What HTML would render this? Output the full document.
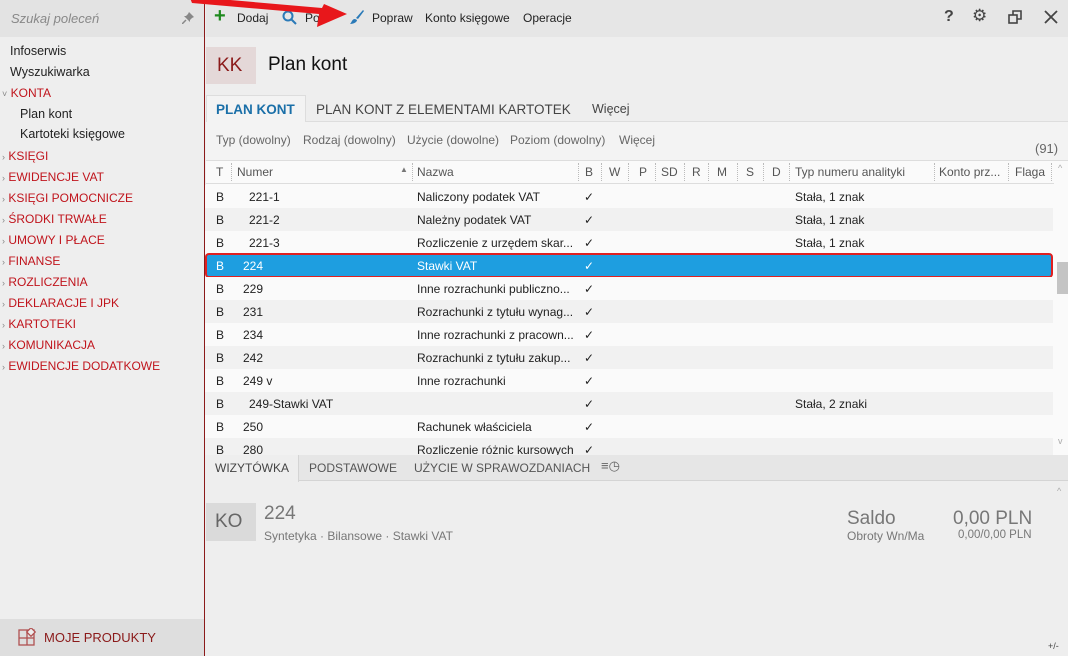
<!DOCTYPE html>
<html><head><meta charset="utf-8"><style>
*{margin:0;padding:0;box-sizing:border-box}
body{width:1068px;height:656px;overflow:hidden;background:#eeeeee;font-family:"Liberation Sans",sans-serif;font-size:12px;color:#222;position:relative}
.a{position:absolute;white-space:nowrap}
.side{position:absolute;left:0;top:0;width:205px;height:656px;background:#eeeeee;border-right:1px solid #8b1a1a}
.nav{color:#c0141c;font-size:12px}
.grey{color:#666}
.row{position:absolute;left:205px;width:848px;height:23px}
.row span{position:absolute;top:5px;white-space:nowrap}
.hdr span{position:absolute;top:5px;color:#555}
.sep{position:absolute;top:163px;height:18px;border-left:1px dotted #bbb}
</style></head><body>
<div class="side">
 <div class="a" style="left:0;top:0;width:204px;height:37px;background:#e3e3e3"></div>
 <div class="a" style="left:11px;top:11px;font-style:italic;color:#888;font-size:13px">Szukaj poleceń</div>
 <svg class="a" style="left:182px;top:12px" width="12" height="12" viewBox="0 0 12 12"><path d="M7 0L12 5L10 6L8 8L8 10L2 4L4 4L6 2Z" fill="#888"/><path d="M4 8L0 12" stroke="#888" stroke-width="1.5"/></svg>
 <div class="a" style="left:10px;top:44px;font-size:12.5px">Infoserwis</div>
 <div class="a" style="left:10px;top:65px;font-size:12.5px">Wyszukiwarka</div>
 <div class="a nav" style="left:2px;top:86px"><span style="color:#888;font-size:9px">˅</span> KONTA</div>
 <div class="a" style="left:20px;top:107px;font-size:12.5px">Plan kont</div>
 <div class="a" style="left:20px;top:127px;font-size:12.5px">Kartoteki księgowe</div>
 <div class="a nav" style="left:2px;top:149px"><span style="color:#888;font-size:9px">›</span> KSIĘGI</div>
 <div class="a nav" style="left:2px;top:170px"><span style="color:#888;font-size:9px">›</span> EWIDENCJE VAT</div>
 <div class="a nav" style="left:2px;top:191px"><span style="color:#888;font-size:9px">›</span> KSIĘGI POMOCNICZE</div>
 <div class="a nav" style="left:2px;top:212px"><span style="color:#888;font-size:9px">›</span> ŚRODKI TRWAŁE</div>
 <div class="a nav" style="left:2px;top:233px"><span style="color:#888;font-size:9px">›</span> UMOWY I PŁACE</div>
 <div class="a nav" style="left:2px;top:254px"><span style="color:#888;font-size:9px">›</span> FINANSE</div>
 <div class="a nav" style="left:2px;top:275px"><span style="color:#888;font-size:9px">›</span> ROZLICZENIA</div>
 <div class="a nav" style="left:2px;top:296px"><span style="color:#888;font-size:9px">›</span> DEKLARACJE I JPK</div>
 <div class="a nav" style="left:2px;top:317px"><span style="color:#888;font-size:9px">›</span> KARTOTEKI</div>
 <div class="a nav" style="left:2px;top:338px"><span style="color:#888;font-size:9px">›</span> KOMUNIKACJA</div>
 <div class="a nav" style="left:2px;top:359px"><span style="color:#888;font-size:9px">›</span> EWIDENCJE DODATKOWE</div>
 <div class="a" style="left:0;top:619px;width:204px;height:37px;background:#dedede"></div>
 <svg class="a" style="left:18px;top:628px" width="18" height="18" viewBox="0 0 18 18" fill="none" stroke="#b05050" stroke-width="1.3"><rect x="1" y="2" width="15" height="15"/><line x1="1" y1="10" x2="16" y2="10"/><line x1="9" y1="2" x2="9" y2="17"/><rect x="10" y="1" width="6" height="6" transform="rotate(45 13 4)" fill="#eee"/></svg>
 <div class="a" style="left:44px;top:630px;color:#8b1a1a;font-size:13px">MOJE PRODUKTY</div>
</div>
<div class="a" style="left:206px;top:0;width:862px;height:37px;background:#e6e6e6"></div>
<div class="a" style="left:214px;top:5px;color:#1e8a1e;font-size:20px;font-weight:bold">+</div>
<div class="a" style="left:237px;top:11px">Dodaj</div>
<svg class="a" style="left:282px;top:10px" width="15" height="15" viewBox="0 0 15 15" fill="none" stroke="#2a7ab8" stroke-width="2"><circle cx="6" cy="6" r="4.5"/><path d="M9 9L14 14"/></svg>
<div class="a" style="left:305px;top:11px">Po</div>
<svg class="a" style="left:349px;top:9px" width="16" height="16" viewBox="0 0 16 16"><path d="M14 1 L7 9 L9 10 L15 2Z" fill="#2a7ab8"/><path d="M6 10 C3 10 3 13 1 15 C5 15 8 13 8 11Z" fill="#2a7ab8"/></svg>
<div class="a" style="left:372px;top:11px">Popraw</div>
<div class="a" style="left:425px;top:11px">Konto księgowe</div>
<div class="a" style="left:523px;top:11px">Operacje</div>
<div class="a" style="left:944px;top:8px;font-size:16px;color:#444;font-weight:bold">?</div>
<div class="a" style="left:972px;top:6px;font-size:17px;color:#444">⚙</div>
<svg class="a" style="left:1008px;top:10px" width="15" height="15" viewBox="0 0 15 15" fill="none" stroke="#444" stroke-width="1.6"><rect x="1" y="5" width="8" height="8"/><path d="M5 5V1H13V9H9"/></svg>
<svg class="a" style="left:1044px;top:10px" width="14" height="14" viewBox="0 0 14 14" stroke="#444" stroke-width="1.8"><path d="M1 1L13 13M13 1L1 13"/></svg>
<svg class="a" style="left:0;top:0" width="380" height="35" viewBox="0 0 380 35"><path d="M190 -2 L196 -3 L322 8 L324 4 L347 14 L317 27 L319 14 L192 3Z" fill="#e8171b"/></svg>
<div class="a" style="left:206px;top:47px;width:50px;height:37px;background:#e4d8d8"></div>
<div class="a" style="left:217px;top:55px;font-size:19px;color:#8b1a1a">KK</div>
<div class="a" style="left:268px;top:54px;font-size:19px;color:#111">Plan kont</div>
<div class="a" style="left:206px;top:121px;width:862px;height:1px;background:#ddd"></div>
<div class="a" style="left:206px;top:95px;width:100px;height:27px;background:#f3f3f3;border:1px solid #ddd;border-bottom:none"></div>
<div class="a" style="left:216px;top:102px;font-size:13.5px;font-weight:bold;color:#1a6fa8">PLAN KONT</div>
<div class="a" style="left:316px;top:102px;font-size:13.5px;color:#444">PLAN KONT Z ELEMENTAMI KARTOTEK</div>
<div class="a" style="left:592px;top:102px;font-size:12.5px;color:#444">Więcej</div>
<div class="a" style="left:206px;top:122px;width:862px;height:38px;background:#f3f3f3"></div>
<div class="a grey" style="left:216px;top:133px">Typ (dowolny)</div>
<div class="a grey" style="left:303px;top:133px">Rodzaj (dowolny)</div>
<div class="a grey" style="left:407px;top:133px">Użycie (dowolne)</div>
<div class="a grey" style="left:510px;top:133px">Poziom (dowolny)</div>
<div class="a grey" style="left:619px;top:133px">Więcej</div>
<div class="a grey" style="left:1035px;top:141px;font-size:13px">(91)</div>
<div class="a" style="left:206px;top:160px;width:862px;height:295px;background:#fafafa;border-top:1px solid #ddd"></div>
<div class="a" style="left:206px;top:183px;width:848px;height:1px;background:#ddd"></div>
<div class="hdr">
<span class="a" style="left:216px;top:165px;color:#555">T</span>
<span class="a" style="left:237px;top:165px;color:#555">Numer</span>
<span class="a" style="left:400px;top:165px;color:#777;font-size:8px">▲</span>
<span class="a" style="left:417px;top:165px;color:#555">Nazwa</span>
<span class="a" style="left:585px;top:165px;color:#555">B</span>
<span class="a" style="left:609px;top:165px;color:#555">W</span>
<span class="a" style="left:639px;top:165px;color:#555">P</span>
<span class="a" style="left:661px;top:165px;color:#555">SD</span>
<span class="a" style="left:692px;top:165px;color:#555">R</span>
<span class="a" style="left:717px;top:165px;color:#555">M</span>
<span class="a" style="left:746px;top:165px;color:#555">S</span>
<span class="a" style="left:772px;top:165px;color:#555">D</span>
<span class="a" style="left:795px;top:165px;color:#555">Typ numeru analityki</span>
<span class="a" style="left:939px;top:165px;color:#555">Konto prz...</span>
<span class="a" style="left:1015px;top:165px;color:#555">Flaga</span>
</div>
<div class="sep" style="left:231px"></div><div class="sep" style="left:412px"></div><div class="sep" style="left:578px"></div><div class="sep" style="left:601px"></div><div class="sep" style="left:628px"></div><div class="sep" style="left:655px"></div><div class="sep" style="left:684px"></div><div class="sep" style="left:708px"></div><div class="sep" style="left:737px"></div><div class="sep" style="left:763px"></div><div class="sep" style="left:789px"></div><div class="sep" style="left:934px"></div><div class="sep" style="left:1008px"></div><div class="sep" style="left:1051px"></div>

<div class="row" style="top:185px;background:#fafafa"><span style="left:11px">B</span><span style="left:44px">221-1</span><span style="left:212px">Naliczony podatek VAT</span><span style="left:379px">✓</span><span style="left:590px">Stała, 1 znak</span></div>
<div class="row" style="top:208px;background:#f1f1f1"><span style="left:11px">B</span><span style="left:44px">221-2</span><span style="left:212px">Należny podatek VAT</span><span style="left:379px">✓</span><span style="left:590px">Stała, 1 znak</span></div>
<div class="row" style="top:231px;background:#fafafa"><span style="left:11px">B</span><span style="left:44px">221-3</span><span style="left:212px">Rozliczenie z urzędem skar...</span><span style="left:379px">✓</span><span style="left:590px">Stała, 1 znak</span></div>
<div class="row" style="top:253px;left:205px;width:848px;height:25px;background:#1e9ee0;border:2px solid #e02020;border-radius:4px;color:#fff"><span style="left:9px;top:4px">B</span><span style="left:36px;top:4px">224</span><span style="left:210px;top:4px">Stawki VAT</span><span style="left:377px;top:4px">✓</span></div>
<div class="row" style="top:277px;background:#fafafa"><span style="left:11px">B</span><span style="left:38px">229</span><span style="left:212px">Inne rozrachunki publiczno...</span><span style="left:379px">✓</span></div>
<div class="row" style="top:300px;background:#f1f1f1"><span style="left:11px">B</span><span style="left:38px">231</span><span style="left:212px">Rozrachunki z tytułu wynag...</span><span style="left:379px">✓</span></div>
<div class="row" style="top:323px;background:#fafafa"><span style="left:11px">B</span><span style="left:38px">234</span><span style="left:212px">Inne rozrachunki z pracown...</span><span style="left:379px">✓</span></div>
<div class="row" style="top:346px;background:#f1f1f1"><span style="left:11px">B</span><span style="left:38px">242</span><span style="left:212px">Rozrachunki z tytułu zakup...</span><span style="left:379px">✓</span></div>
<div class="row" style="top:369px;background:#fafafa"><span style="left:11px">B</span><span style="left:38px">249 v</span><span style="left:212px">Inne rozrachunki</span><span style="left:379px">✓</span></div>
<div class="row" style="top:392px;background:#f1f1f1"><span style="left:11px">B</span><span style="left:44px">249-Stawki VAT</span><span style="left:379px">✓</span><span style="left:590px">Stała, 2 znaki</span></div>
<div class="row" style="top:415px;background:#fafafa"><span style="left:11px">B</span><span style="left:38px">250</span><span style="left:212px">Rachunek właściciela</span><span style="left:379px">✓</span></div>
<div class="row" style="top:438px;height:17px;overflow:hidden;background:#f1f1f1"><span style="left:11px">B</span><span style="left:38px">280</span><span style="left:212px">Rozliczenie różnic kursowych</span><span style="left:379px">✓</span></div>
<div class="a" style="left:1058px;top:163px;font-size:9px;color:#aaa">^</div>
<div class="a" style="left:1057px;top:262px;width:11px;height:32px;background:#c4c4c4"></div>
<div class="a" style="left:1058px;top:436px;font-size:9px;color:#aaa">v</div>
<div class="a" style="left:206px;top:455px;width:862px;height:26px;background:#e6e6e6;border-bottom:1px solid #d4d4d4"></div>
<div class="a" style="left:206px;top:455px;width:93px;height:27px;background:#eeeeee;border-right:1px solid #d4d4d4"></div>
<div class="a" style="left:215px;top:461px;color:#444">WIZYTÓWKA</div>
<div class="a" style="left:309px;top:461px;color:#555">PODSTAWOWE</div>
<div class="a" style="left:414px;top:461px;color:#555">UŻYCIE W SPRAWOZDANIACH</div>
<div class="a" style="left:601px;top:458px;color:#666;font-size:13px">≡◷</div>
<div class="a" style="left:1057px;top:486px;font-size:9px;color:#aaa">^</div>
<div class="a" style="left:206px;top:503px;width:50px;height:38px;background:#dadada"></div>
<div class="a" style="left:215px;top:511px;font-size:19px;color:#666">KO</div>
<div class="a" style="left:264px;top:503px;font-size:19px;color:#777">224</div>
<div class="a" style="left:264px;top:529px;color:#777">Syntetyka · Bilansowe · Stawki VAT</div>
<div class="a" style="left:847px;top:508px;font-size:19px;color:#777">Saldo</div>
<div class="a" style="left:953px;top:508px;font-size:19px;color:#777">0,00 PLN</div>
<div class="a" style="left:847px;top:529px;color:#777">Obroty Wn/Ma</div>
<div class="a" style="left:958px;top:529px;color:#777;font-size:11.5px">0,00/0,00 PLN</div>
<div class="a" style="left:1048px;top:641px;font-size:9px;color:#444">+/-</div>
</body></html>
